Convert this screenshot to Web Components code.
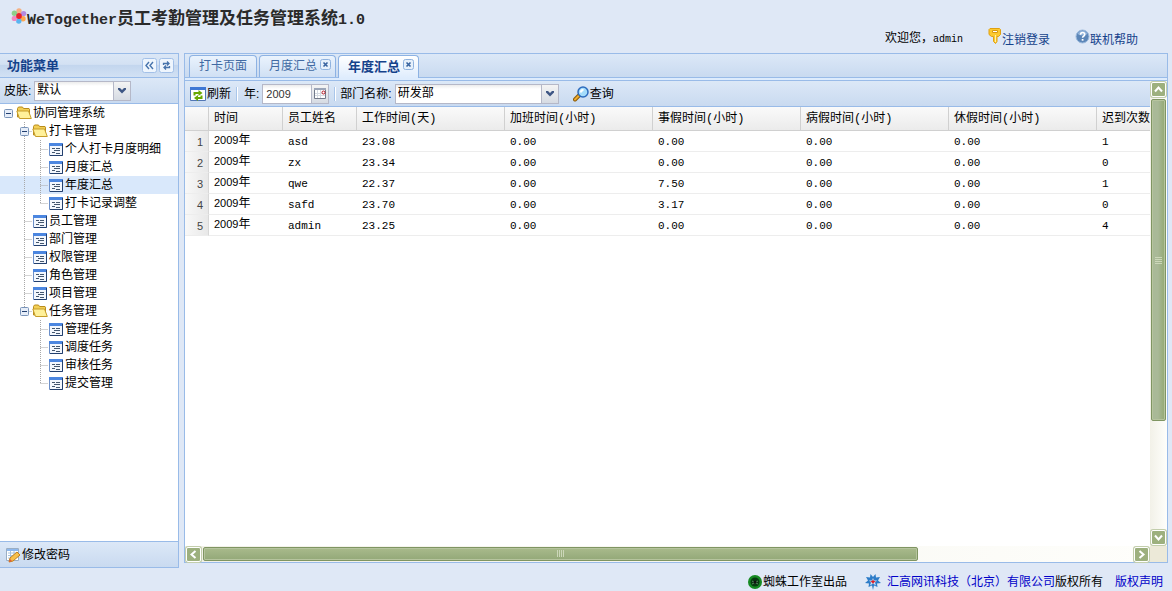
<!DOCTYPE html>
<html lang="zh-CN">
<head>
<meta charset="utf-8">
<title>WeTogether员工考勤管理及任务管理系统1.0</title>
<style>
  html, body {
    height: 100%;
    margin: 0;
  }
  body {
    display: flex;
    flex-direction: column;
    overflow: hidden;
    background: #dfe8f6;
    color: #000;
    font: 12px/16px "Liberation Sans", "Noto Sans CJK SC", sans-serif;
    --line: #99bbe8;
    --title: #15428b;
    --bar: linear-gradient(to bottom, #dce8f7, #c9daf0);
    --mono: "Liberation Mono", "Noto Sans CJK SC", monospace;
  }
  main {
    flex: 1;
    min-height: 0;
    display: flex;
    gap: 5px;
    padding-right: 4px;
  }
</style>
</head>
<body>
  <app-header user="admin">
    <icon-link slot="links" icon="key" href="#logout">注销登录</icon-link>
    <icon-link slot="links" icon="help" href="#help">联机帮助</icon-link>
  </app-header>

  <main>
    <side-panel heading="功能菜单">
      <combo-box slot="tools" label="皮肤:" value="默认"></combo-box>
      <tree-node label="协同管理系统" open>
        <tree-node label="打卡管理" open>
          <tree-node label="个人打卡月度明细"></tree-node>
          <tree-node label="月度汇总"></tree-node>
          <tree-node label="年度汇总" selected></tree-node>
          <tree-node label="打卡记录调整"></tree-node>
        </tree-node>
        <tree-node label="员工管理"></tree-node>
        <tree-node label="部门管理"></tree-node>
        <tree-node label="权限管理"></tree-node>
        <tree-node label="角色管理"></tree-node>
        <tree-node label="项目管理"></tree-node>
        <tree-node label="任务管理" open>
          <tree-node label="管理任务"></tree-node>
          <tree-node label="调度任务"></tree-node>
          <tree-node label="审核任务"></tree-node>
          <tree-node label="提交管理"></tree-node>
        </tree-node>
      </tree-node>
      <tool-button slot="bottom" icon="edit">修改密码</tool-button>
    </side-panel>

    <tab-panel>
      <tab-item slot="tabs">打卡页面</tab-item>
      <tab-item slot="tabs" closable>月度汇总</tab-item>
      <tab-item slot="tabs" closable active>年度汇总</tab-item>
      <scroll-pane>
        <tool-bar>
          <tool-button icon="refresh">刷新</tool-button>
          <bar-separator></bar-separator>
          <date-field label="年:" value="2009"></date-field>
          <bar-separator></bar-separator>
          <combo-box label="部门名称:" value="研发部" wide></combo-box>
          <tool-button icon="search" spaced>查询</tool-button>
        </tool-bar>
        <report-grid></report-grid>
      </scroll-pane>
    </tab-panel>
  </main>

  <app-footer></app-footer>

<script>
"use strict";

const ICONS = {
  flower: `<svg width="16" height="16" viewBox="0 0 16 16">
    <circle cx="8" cy="3" r="2.7" fill="#f4b183"/><circle cx="12.6" cy="5.6" r="2.7" fill="#b58be0"/>
    <circle cx="12" cy="10.8" r="2.7" fill="#ffa64d"/><circle cx="7.8" cy="13" r="2.7" fill="#5ab4f0"/>
    <circle cx="3.4" cy="10.4" r="2.7" fill="#f08ac0"/><circle cx="3.4" cy="5.2" r="2.7" fill="#8ed08a"/>
    <circle cx="8" cy="8" r="2.9" fill="#e8202c"/></svg>`,
  key: `<svg width="14" height="18" viewBox="0 0 14 18">
    <path d="M2 .5h9.500l1 1v5l-2 2H9v5L7.500 15.500 5.500 13.500v-5h-2L1 6.500v-5z" fill="#fcc92f" stroke="#e0a010"/>
    <path d="M4.500 2.500h5v2h-5z" fill="#fff" stroke="#d89a10"/><path d="M7.500 7v7" stroke="#fff2a8"/></svg>`,
  help: `<svg width="15" height="18" viewBox="0 0 15 18">
    <circle cx="7.500" cy="8.500" r="6.500" fill="#5c86b8" stroke="#9bb9dc"/>
    <path d="M2.500 6a5.500 5.500 0 0 1 10 0q-5 3-10 0z" fill="#90b2da"/>
    <path d="M5.500 6.800q0-2.300 2.100-2.300t2.100 2q0 1.200-1.200 1.800-.9.500-.9 1.500" fill="none" stroke="#fff" stroke-width="1.600"/>
    <path d="M6.700 11h1.800v1.700H6.700z" fill="#fff"/></svg>`,
  folder: `<svg width="16" height="16" viewBox="0 0 16 16">
    <path d="M1.500 12V3.500l1-1.500h4l1 1.500h5.500l.5.700V12z" fill="#f2cf56" stroke="#b98c1c"/>
    <path d="M3.500 13.500 .8 6h11.700l2.800 7.500z" fill="#fff19a" stroke="#c79d2a"/></svg>`,
  page: `<svg width="16" height="16" viewBox="0 0 16 16">
    <path d="M1.500 2.500h13v12h-13z" fill="#f3f7fd" stroke="#6c8fc8"/><path d="M1 2h14v3H1z" fill="#4b86e0"/>
    <path d="M14.500 3v11.500H2" fill="none" stroke="#23406e"/>
    <path d="M4 7.500h3M8 7.500h4M6 9.500h6M4 11.500h3M8 12.500h4" stroke="#43566e"/></svg>`,
  edit: `<svg width="16" height="16" viewBox="0 0 16 16">
    <path d="M1.500 1.500h12v12h-12z" fill="#fff" stroke="#9aaec4"/><path d="M2 2h11v2H2z" fill="#8db8ee"/>
    <path d="M3 6h9M3 8.500h9M3 11h6M5.500 4v9M9 4v7" stroke="#a9c4df"/>
    <path d="M4 15l1-4 7-6 3 3-7 6z" fill="#f6c04c" stroke="#c47f1c"/><path d="M4 15l1-3 2 2z" fill="#e05a3a"/></svg>`,
  refresh: `<svg width="16" height="16" viewBox="0 0 16 16">
    <path d="M.5 1.500h15v13H.5z" fill="#fff" stroke="#5277b5"/><path d="M0 1h16v3H0z" fill="#3f78d4"/>
    <path d="M4.500 9.500V7h4.500" fill="none" stroke="#68a800" stroke-width="2"/><path d="M8.500 4l4 3-4 3z" fill="#68a800"/>
    <path d="M11.500 9.500V12H8" fill="none" stroke="#68a800" stroke-width="2"/><path d="M8 9l-4 3 4 3z" fill="#68a800"/></svg>`,
  search: `<svg width="16" height="16" viewBox="0 0 16 16">
    <path d="M6 9.500l-4 4" stroke="#8a5a08" stroke-width="4" stroke-linecap="round"/>
    <path d="M5.500 10l-3.500 3.500" stroke="#f2ae2c" stroke-width="2" stroke-linecap="round"/>
    <circle cx="10" cy="6" r="5" fill="#a4dcfb" stroke="#2d6bbd" stroke-width="1.500"/>
    <path d="M7 6a3 3 0 0 1 3-3l1 1-3 3z" fill="#fff"/></svg>`,
  calendar: `<svg width="16" height="17" viewBox="0 0 16 17">
    <path d="M2.500 3.500h11v10h-11z" fill="#fff" stroke="#72798a"/><path d="M2 3h12v2H2z" fill="#9ba5b8"/>
    <path d="M3 8.500h10M3 10.500h10M5.500 5v8M8.500 5v8" stroke="#d5dae2"/>
    <circle cx="11.500" cy="7.500" r="1.500" fill="#fff" stroke="#b3121e"/></svg>`,
  spider: `<svg width="14" height="14" viewBox="0 0 14 14"><circle cx="7" cy="7" r="7" fill="#168a22"/>
    <circle cx="7" cy="7" r="4.500" fill="#073b10"/><path d="M4 6l6 3M4 9l6-3" stroke="#5a8860"/>
    <circle cx="7" cy="7" r="1.500" fill="#111"/></svg>`,
  star: `<svg width="16" height="16" viewBox="0 0 16 16">
    <path d="M8 3L5.500 0 5 3.500 1 3l2 3.500L0 9l4 .500L3.500 13 7 11.500 8 16l1-4.500 3.500 1.500-.5-3.500L16 9l-3-2.500L15 3l-4 .500L10.500 0z" fill="#2c7cc8"/>
    <path d="M8 4l1 2.500h3L10 8.500l1 3-3-2-3 2 1-3-2-2h3z" fill="#cde4fa"/>
    <path d="M8 5.500l1 1.500 2 .500-2 1-1 1.500-1-1.500-2-1 2-.500z" fill="#d8202a"/></svg>`,
  collapse: `<svg width="15" height="15" viewBox="0 0 15 15"><rect x=".5" y=".5" width="14" height="14" rx="2" fill="#eef5fd" stroke="#a3c0e8"/>
    <path d="M7 4L4 7.500 7 11M11 4L8 7.500 11 11" fill="none" stroke="#4673ac" stroke-width="1.400"/></svg>`,
  reload: `<svg width="15" height="15" viewBox="0 0 15 15"><rect x=".5" y=".5" width="14" height="14" rx="2" fill="#eef5fd" stroke="#a3c0e8"/>
    <path d="M4.500 7V5.500h5M8 3.500l2 2-2 2M10.500 8v1.500h-5M7 7.500l-2 2 2 2" fill="none" stroke="#4673ac" stroke-width="1.300"/></svg>`,
  close: `<svg width="11" height="11" viewBox="0 0 11 11"><rect x=".5" y=".5" width="10" height="10" rx="2" fill="#e6f0fb" stroke="#8fb2de"/>
    <path d="M3.500 3.500l4 4M7.500 3.500l-4 4" stroke="#37629f" stroke-width="1.600"/></svg>`,
  down: `<svg width="17" height="17" viewBox="0 0 17 17"><path d="M4 6h2l2 2 2-2h2v1.500l-4 4-4-4z" fill="#3e5684"/></svg>`
};

// shared by every element below
class BaseElement extends HTMLElement {
  constructor() {
    super();
    this.attachShadow({ mode: "open" });
  }

  connectedCallback() {
    this.shadowRoot.innerHTML = `<style>
      :host([hidden]) { display: none; }
      * { box-sizing: border-box; }
      svg { display: block; flex: none; }
      button { margin: 0; padding: 0; border: 0; background: none; font: inherit; color: inherit; cursor: pointer; }
      ${this.styles()}
    </style>${this.render()}`;
  }

  attr(name) {
    return this.getAttribute(name) || "";
  }

  styles() {
    return "";
  }
}

class AppHeader extends BaseElement {
  styles() {
    return `
      :host { display: flex; justify-content: space-between; flex: none; height: 53px; }
      .brand { display: flex; align-items: flex-start; padding: 8px 0 0 11px; }
      h1 { margin: 0; font: bold 17px/18px "Noto Sans CJK SC", sans-serif; color: #2a2a2a; white-space: nowrap; }
      h1 span { font-family: "Liberation Mono", monospace; font-size: 15px; }
      nav { display: flex; align-items: flex-end; gap: 25px; padding: 0 34px 5px 0; }
      .user { font-family: var(--mono); }
      .user span { font-size: 10px; }`;
  }

  render() {
    return `
      <div class="brand">${ICONS.flower}<h1><span>WeTogether</span>员工考勤管理及任务管理系统<span>1.0</span></h1></div>
      <nav><div class="user">欢迎您，<span>${this.attr("user")}</span></div><slot name="links"></slot></nav>`;
  }
}
customElements.define("app-header", AppHeader);

class IconLink extends BaseElement {
  styles() {
    return `
      :host { display: block; }
      a { display: flex; align-items: flex-end; height: 20px; color: var(--title); text-decoration: none; }
      svg { align-self: flex-start; }`;
  }

  render() {
    return `<a href="${this.attr("href")}">${ICONS[this.attr("icon")]}<slot></slot></a>`;
  }
}
customElements.define("icon-link", IconLink);

class SidePanel extends BaseElement {
  styles() {
    return `
      :host { display: flex; flex-direction: column; flex: none; width: 179px; background: #fff;
        border: 1px solid var(--line); border-left: 0; box-sizing: border-box; }
      header { display: flex; align-items: center; gap: 2px; height: 24px; padding: 0 4px 0 7px;
        background: linear-gradient(to bottom, #dbe7f6 0, #d3e1f3 45%, #c3d6ee 50%, #d2e1f4 100%);
        border-bottom: 1px solid var(--line); }
      h2 { flex: 1; margin: 0; font-size: 13px; line-height: 16px; color: var(--title); }
      .tools, .bottom { display: flex; align-items: center; background: var(--bar); padding: 0 4px; }
      .tools { height: 26px; border-bottom: 1px solid var(--line); }
      .bottom { height: 26px; border-top: 1px solid var(--line); padding: 0 5px; }
      .body { flex: 1; min-height: 0; overflow: hidden; }`;
  }

  render() {
    return `
      <header>
        <h2>${this.attr("heading")}</h2>
        <button aria-label="收起">${ICONS.collapse}</button>
        <button aria-label="刷新菜单">${ICONS.reload}</button>
      </header>
      <div class="tools"><slot name="tools"></slot></div>
      <div class="body"><slot></slot></div>
      <div class="bottom"><slot name="bottom"></slot></div>`;
  }
}
customElements.define("side-panel", SidePanel);

class TreeNode extends BaseElement {
  styles() {
    return `
      :host { display: block; }
      .row { display: flex; align-items: center; height: 18px; white-space: nowrap; cursor: pointer; }
      :host([selected]) > .row { background: #d9e8fb; }
      .row span { padding-left: 1px; }`;
  }

  // dotted connector lines for the levels above this node
  guides() {
    let html = "";
    let node = this.parentElement;
    while (node && node.localName === "tree-node") {
      const top = node.parentElement.localName !== "tree-node";
      const line = !top && node.nextElementSibling ? `<path d="M8.500 0v18"/>` : "";
      html = this.guide(line) + html;
      node = node.parentElement;
    }
    return html;
  }

  guide(content) {
    return `<svg width="16" height="18" fill="none" stroke="#a8a8a8" stroke-dasharray="1 1">${content}</svg>`;
  }

  elbow() {
    let lines = "";
    if (this.parentElement.localName === "tree-node") {
      lines = `<path d="M8.500 0v${this.nextElementSibling ? 18 : 9}M8.500 9.500h8"/>`;
    }
    if (this.hasAttribute("open")) {
      lines += `<g stroke-dasharray="none"><rect x="4.500" y="5.500" width="8" height="8" rx="1" fill="#e6edf8" stroke="#7893b8"/>
        <path d="M6 9.500h5" stroke="#223f70"/></g>`;
    }
    return this.guide(lines);
  }

  render() {
    const icon = this.hasAttribute("open") ? ICONS.folder : ICONS.page;
    return `<div class="row">${this.guides()}${this.elbow()}${icon}<span>${this.attr("label")}</span></div><slot></slot>`;
  }
}
customElements.define("tree-node", TreeNode);

class ToolButton extends BaseElement {
  styles() {
    return `
      :host { display: block; }
      :host([spaced]) { padding-left: 14px; }
      button { display: flex; align-items: center; gap: 1px; white-space: nowrap; }`;
  }

  render() {
    return `<button type="button">${ICONS[this.attr("icon")]}<slot></slot></button>`;
  }
}
customElements.define("tool-button", ToolButton);

class ComboBox extends BaseElement {
  styles() {
    return `
      :host { display: flex; align-items: center; gap: 3px; white-space: nowrap; }
      .box { display: grid; grid-template-columns: 1fr 18px; width: 97px; height: 20px; }
      :host([wide]) .box { width: 164px; }
      select { grid-area: 1 / 1 / 2 / 3; appearance: none; margin: 0; padding: 0 20px 2px 2px; border: 1px solid #b5b8c8;
        border-radius: 0; background: linear-gradient(to bottom, #ececec, #fff 4px); font: inherit; color: inherit; }
      .trigger { grid-area: 1 / 2 / 2 / 3; pointer-events: none; border: 1px solid #b5b8c8;
        background: linear-gradient(to bottom, #f4f4f4, #d6dbe3); }`;
  }

  render() {
    return `<label for="field">${this.attr("label")}</label>
      <div class="box"><select id="field"><option>${this.attr("value")}</option></select>
      <span class="trigger">${ICONS.down}</span></div>`;
  }
}
customElements.define("combo-box", ComboBox);

class DateField extends BaseElement {
  styles() {
    return `
      :host { display: flex; align-items: center; gap: 3px; white-space: nowrap; }
      .box { display: flex; width: 67px; height: 20px; }
      input { flex: 1; min-width: 0; margin: 0; padding: 0 3px; border: 1px solid #b5b8c8; border-right: 0;
        background: linear-gradient(to bottom, #ececec, #fff 4px); font: inherit; font-size: 11px; color: #333; }
      button { width: 18px; border: 1px solid #b5b8c8; background: linear-gradient(to bottom, #f4f4f4, #d6dbe3); }`;
  }

  render() {
    return `<label for="field">${this.attr("label")}</label>
      <div class="box"><input id="field" type="text" value="${this.attr("value")}">
      <button type="button" aria-label="选择日期">${ICONS.calendar}</button></div>`;
  }
}
customElements.define("date-field", DateField);

class BarSeparator extends BaseElement {
  styles() {
    return `:host { display: block; width: 2px; height: 14px; margin: 0 4px 0 5px; border-left: 1px solid #a9c6ea;
      border-right: 1px solid #fff; box-sizing: border-box; }`;
  }

  render() {
    return "";
  }
}
customElements.define("bar-separator", BarSeparator);

class ToolBar extends BaseElement {
  styles() {
    return `
      :host { display: flex; flex: none; align-items: center; height: 26px; padding: 0 5px; overflow: hidden;
        box-sizing: border-box; background: var(--bar); border-bottom: 1px solid var(--line); }
      ::slotted(date-field) { margin-left: 2px; }`;
  }

  render() {
    return "<slot></slot>";
  }
}
customElements.define("tool-bar", ToolBar);

class TabPanel extends BaseElement {
  styles() {
    return `
      :host { display: flex; flex-direction: column; flex: 1; min-width: 0; margin-bottom: 5px;
        box-sizing: border-box; border: 1px solid var(--line); }
      .strip { display: flex; flex: none; align-items: flex-end; gap: 2px; height: 24px; padding: 0 4px;
        background: var(--bar); border-bottom: 1px solid var(--line); }
      .spacer { flex: none; height: 3px; background: #deecfd; border-bottom: 1px solid var(--line); }`;
  }

  render() {
    return `<div class="strip" role="tablist"><slot name="tabs"></slot></div><div class="spacer"></div><slot></slot>`;
  }
}
customElements.define("tab-panel", TabPanel);

class TabItem extends BaseElement {
  styles() {
    return `
      :host { display: flex; align-items: flex-start; height: 22px; padding: 0 9px; box-sizing: border-box;
        border: 1px solid #8db2e3; border-bottom: 0; border-radius: 4px 4px 0 0; color: #416aa3;
        background: linear-gradient(to bottom, #eaf3fd, #d0e0f4); white-space: nowrap; }
      :host([closable]) { padding-right: 4px; gap: 3px; }
      :host([active]) { height: 23px; margin-bottom: -1px; color: var(--title); font-size: 13px; font-weight: bold;
        background: linear-gradient(to bottom, #fff, #deecfd); }
      .text { line-height: 21px; }
      .close { padding-top: 3px; }`;
  }

  render() {
    const close = this.hasAttribute("closable")
      ? `<button class="close" aria-label="关闭">${ICONS.close}</button>` : "";
    return `<button class="text" role="tab"><slot></slot></button>${close}`;
  }
}
customElements.define("tab-item", TabItem);

class ScrollStrip extends BaseElement {
  styles() {
    return `
      :host { display: flex; padding: 1px; box-sizing: border-box; background: linear-gradient(to right, #f2f1e8, #fefefb); }
      :host([vertical]) { flex-direction: column; }
      button { flex: none; width: 15px; height: 15px; background: #9db07e; border: 1px solid #fff; border-radius: 2px;
        box-shadow: 0 0 0 1px #c3ceac; }
      .track { flex: 1; min-width: 0; min-height: 0; display: flex; padding: 0 2px; }
      .thumb { display: flex; align-items: center; justify-content: center; width: 77%; border: 1px solid #7f9562;
        border-radius: 2px; background: linear-gradient(to bottom, #a9ba8c, #93a878); box-shadow: inset 0 0 0 1px #b6c49e; }
      :host([vertical]) .track { flex-direction: column; padding: 2px 0; }
      :host([vertical]) .thumb { width: auto; height: 75%; background: linear-gradient(to right, #a9b997, #a9b997 45%, #93a873); }`;
  }

  arrow(path) {
    return `<svg width="13" height="13" viewBox="0 0 13 13"><path d="${path}" fill="none" stroke="#fff" stroke-width="2"/></svg>`;
  }

  render() {
    const v = this.hasAttribute("vertical");
    const grip = v ? "M0 1.500h7M0 3.500h7M0 5.500h7M0 7.500h7" : "M.5 0v7M2.500 0v7M4.500 0v7M6.500 0v7";
    return `
      <button aria-label="向前滚动">${this.arrow(v ? "M3 8.500l3.500-4 3.500 4" : "M8.500 3l-4 3.500 4 3.500")}</button>
      <div class="track"><div class="thumb"><svg width="8" height="8"><path d="${grip}" stroke="#ccd7b9"/></svg></div></div>
      <button aria-label="向后滚动">${this.arrow(v ? "M3 4.500l3.500 4 3.500-4" : "M4.500 3l4 3.500-4 3.500")}</button>`;
  }
}
customElements.define("scroll-strip", ScrollStrip);

class ScrollPane extends BaseElement {
  styles() {
    return `
      :host { flex: 1; min-height: 0; display: grid; grid-template: minmax(0, 1fr) 16px / minmax(0, 1fr) 17px; background: #fff; }
      .view { display: flex; flex-direction: column; overflow: hidden; }
      .corner { background: #ece9d8; }`;
  }

  render() {
    return `<div class="view"><slot></slot></div><scroll-strip vertical></scroll-strip>
      <scroll-strip></scroll-strip><div class="corner"></div>`;
  }
}
customElements.define("scroll-pane", ScrollPane);

class ReportGrid extends BaseElement {
  constructor() {
    super();
    this.columns = ["时间", "员工姓名", "工作时间(天)", "加班时间(小时)", "事假时间(小时)",
      "病假时间(小时)", "休假时间(小时)", "迟到次数"];
    this.rows = [
      ["2009年", "asd", "23.08", "0.00", "0.00", "0.00", "0.00", "1"],
      ["2009年", "zx", "23.34", "0.00", "0.00", "0.00", "0.00", "0"],
      ["2009年", "qwe", "22.37", "0.00", "7.50", "0.00", "0.00", "1"],
      ["2009年", "safd", "23.70", "0.00", "3.17", "0.00", "0.00", "0"],
      ["2009年", "admin", "23.25", "0.00", "0.00", "0.00", "0.00", "4"]
    ];
  }

  styles() {
    return `
      :host { display: block; flex: 1; min-height: 0; overflow: hidden; }
      table { table-layout: fixed; width: 1060px; border-collapse: separate; border-spacing: 0; }
      .num { width: 24px; }
      .short { width: 74px; }
      th { height: 24px; padding: 0 5px; text-align: left; font: 12px/16px var(--mono); white-space: nowrap;
        background: linear-gradient(to bottom, #fafafa, #ebebeb); border-right: 1px solid #d0d0d0; border-bottom: 1px solid #d0d0d0; }
      td { height: 21px; padding: 2px 5px 0; border-bottom: 1px solid #ededed; font: 11px/16px var(--mono); }
      td:nth-child(2) { padding-top: 1px; font-family: inherit; font-size: 12px; vertical-align: top; }
      td:first-child { font-family: "Liberation Sans", sans-serif; text-align: right; color: #444;
        background: linear-gradient(to right, #f8f8f8, #e8e8e8); border-right: 1px solid #d8d8d8; }
      td span { font: 11px/16px "Liberation Sans", sans-serif; }`;
  }

  render() {
    const head = this.columns.map(c => `<th scope="col">${c}</th>`).join("");
    const body = this.rows.map((row, i) => {
      const cells = row.map((c, n) => n === 0
        ? `<td><span>${c.slice(0, 4)}</span>${c.slice(4)}</td>` : `<td>${c}</td>`).join("");
      return `<tr><td>${i + 1}</td>${cells}</tr>`;
    }).join("");
    return `<table>
      <colgroup><col class="num"><col class="short"><col class="short"><col span="6"></colgroup>
      <thead><tr><th></th>${head}</tr></thead><tbody>${body}</tbody></table>`;
  }
}
customElements.define("report-grid", ReportGrid);

class AppFooter extends BaseElement {
  styles() {
    return `
      :host { display: flex; flex: none; justify-content: flex-end; align-items: center; height: 23px;
        padding: 5px 9px 0 0; box-sizing: border-box; white-space: nowrap; }
      span, a { display: block; }
      a { color: #0000c8; text-decoration: none; }
      .studio { padding: 0 18px 0 1px; }
      .company { padding-left: 6px; }
      .legal { padding-left: 12px; }`;
  }

  render() {
    return `${ICONS.spider}<span class="studio">蜘蛛工作室出品</span>${ICONS.star}
      <a class="company" href="#company">汇高网讯科技（北京）有限公司</a><span>版权所有</span>
      <a class="legal" href="#legal">版权声明</a>`;
  }
}
customElements.define("app-footer", AppFooter);
</script>
</body>
</html>
